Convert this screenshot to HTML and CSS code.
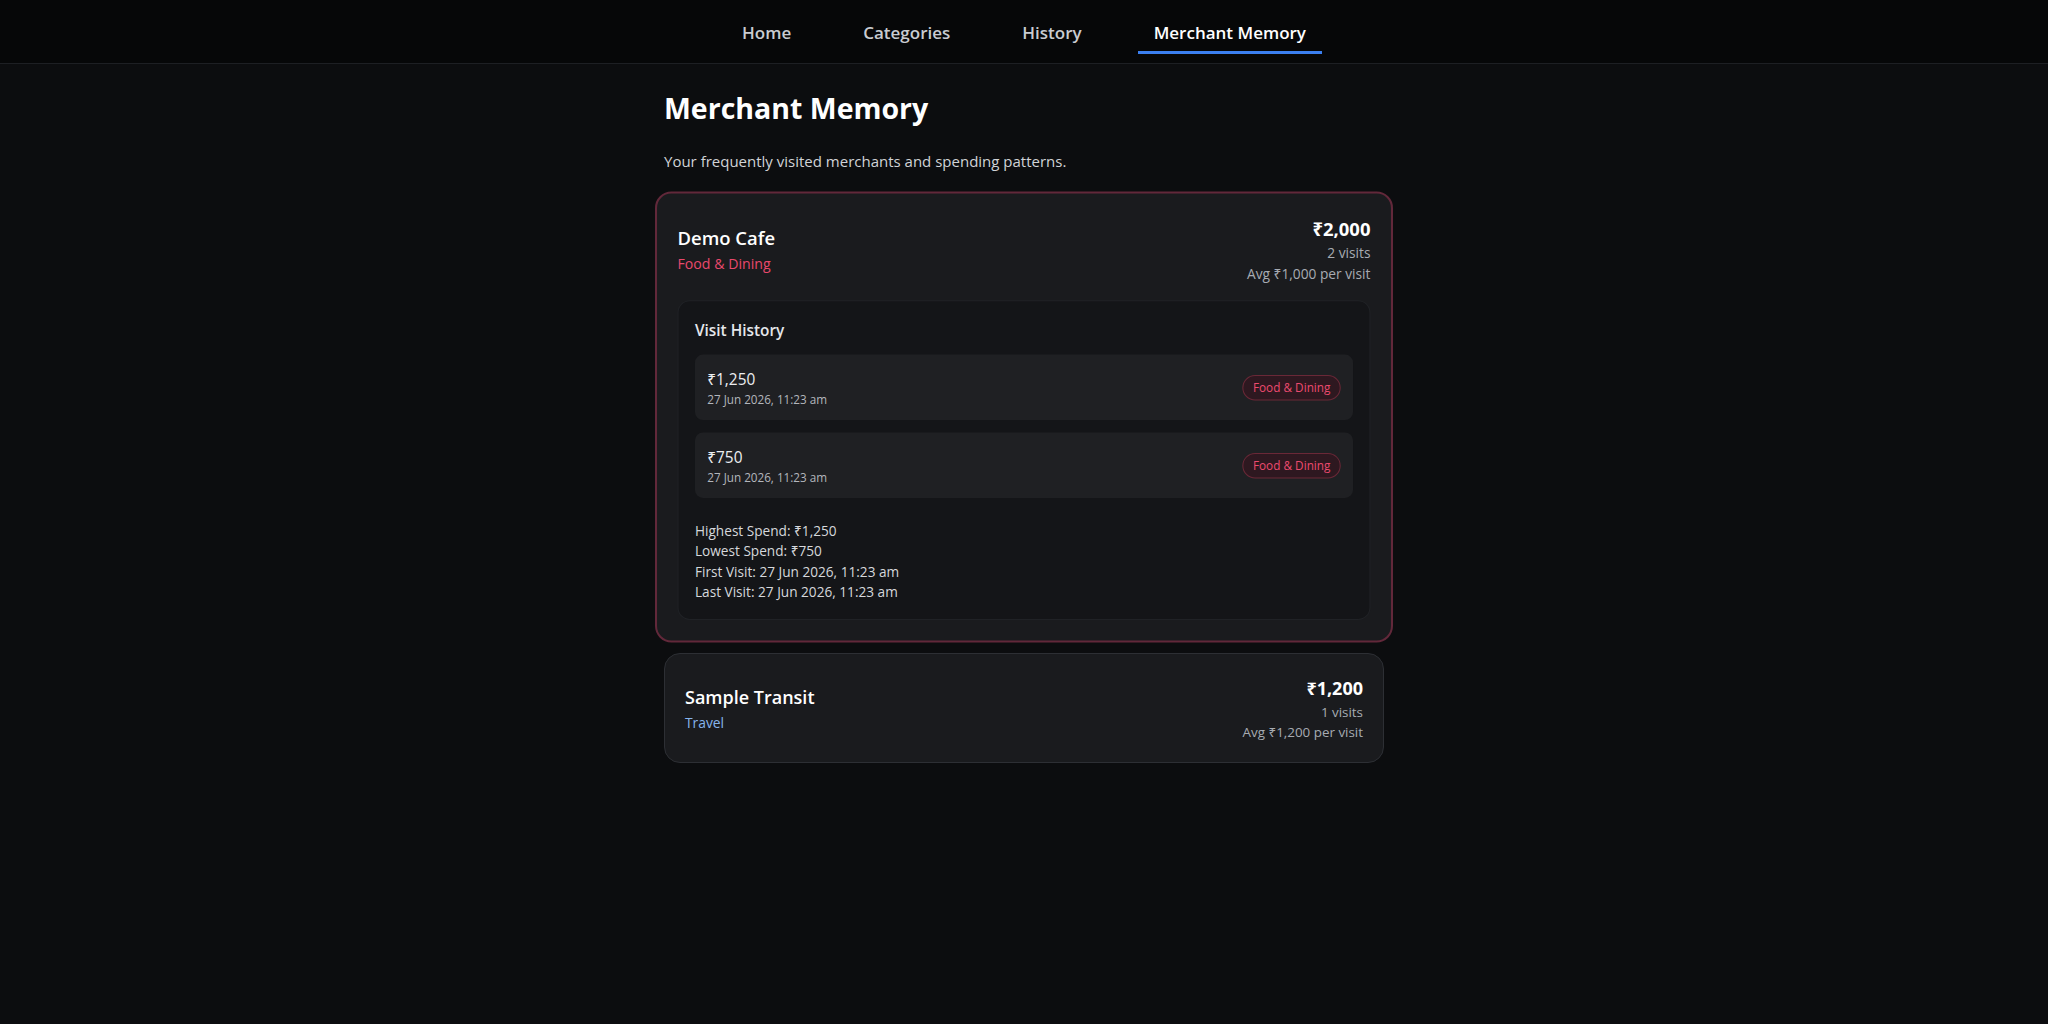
FILE: index.html
```html
<!DOCTYPE html>
<html lang="en">
  <head>
    <meta charset="UTF-8" />
    <meta name="viewport" content="width=device-width, initial-scale=1.0" />
    <title>Merchant Memory</title>
    <link rel="stylesheet" href="styles.css">
  </head>
  <body>
    <nav class="navbar">
      <a href="#" class="nav-link">Home</a>
      <a href="#" class="nav-link">Categories</a>
      <a href="#" class="nav-link">History</a>
      <a href="#" class="nav-link active">Merchant Memory</a>
    </nav>

    <main class="container">
      <h1 class="page-title">Merchant Memory</h1>
      <p class="page-subtitle">Your frequently visited merchants and spending patterns.</p>

      <div class="merchant-list">
        <!-- expanded merchant -->
        <div class="merchant-card expanded">
          <div class="merchant-header">
            <div>
              <div class="merchant-name">Demo Cafe</div>
              <div class="merchant-category food">Food &amp; Dining</div>
            </div>
            <div class="merchant-totals">
              <div class="merchant-amount">₹2,000</div>
              <div class="merchant-meta">2 visits</div>
              <div class="merchant-meta">Avg ₹1,000 per visit</div>
            </div>
          </div>

          <div class="visit-history">
            <div class="visit-title">Visit History</div>
            <div class="visit-list">
              <div class="visit-row">
                <div>
                  <div class="visit-amount">₹1,250</div>
                  <div class="visit-date">27 Jun 2026, 11:23 am</div>
                </div>
                <span class="badge">Food &amp; Dining</span>
              </div>
              <div class="visit-row">
                <div>
                  <div class="visit-amount">₹750</div>
                  <div class="visit-date">27 Jun 2026, 11:23 am</div>
                </div>
                <span class="badge">Food &amp; Dining</span>
              </div>
            </div>
            <div class="visit-stats">
              <div>Highest Spend: ₹1,250</div>
              <div>Lowest Spend: ₹750</div>
              <div>First Visit: 27 Jun 2026, 11:23 am</div>
              <div>Last Visit: 27 Jun 2026, 11:23 am</div>
            </div>
          </div>
        </div>

        <div class="merchant-card">
          <div class="merchant-header">
            <div>
              <div class="merchant-name">Sample Transit</div>
              <div class="merchant-category travel">Travel</div>
            </div>
            <div class="merchant-totals">
              <div class="merchant-amount">₹1,200</div>
              <div class="merchant-meta">1 visits</div>
              <div class="merchant-meta">Avg ₹1,200 per visit</div>
            </div>
          </div>
        </div>
      </div>
    </main>
  </body>
</html>
```

FILE: styles.css
```css
body {
  font-family: "Open Sans", "Noto Sans", sans-serif;
  margin: 0;
  padding: 0;
  background-color: #0c0d0f;
  color: #f3f4f6;
  min-height: 100vh;
}
.navbar {
  background-color: #060708;
  border-bottom: 1px solid #1d1f23;
  height: 63px;
  display: flex;
  justify-content: center;
  align-items: flex-end;
  gap: 40px;
}
.nav-link {
  color: #c9ccd1;
  text-decoration: none;
  font-size: 17px;
  font-weight: 600;
  line-height: 24px;
  padding: 0 16px 6px;
  margin-bottom: 9px;
  border-bottom: 3px solid transparent;
}
.nav-link.active {
  color: #ffffff;
  border-bottom-color: #3b7ff0;
}
.container {
  max-width: 720px;
  margin: 0 auto;
  padding: 26px 0 40px;
}
.page-title {
  margin: 0;
  font-size: 28.5px;
  line-height: 36px;
  font-weight: 700;
  color: #ffffff;
}
.page-subtitle {
  margin: 23px 0 24px;
  font-size: 15px;
  line-height: 24px;
  color: #d1d3d7;
}
.merchant-list {
  display: flex;
  flex-direction: column;
  gap: 16px;
}
.merchant-card {
  background-color: #1a1b1e;
  border: 1px solid #2d2f34;
  border-radius: 16px;
  padding: 20px;
}
.merchant-card.expanded {
  border: 2px solid #62283a;
  transform: scale(1.025);
}
.merchant-header {
  display: flex;
  justify-content: space-between;
  align-items: center;
}
.merchant-name {
  font-size: 18px;
  line-height: 28px;
  font-weight: 600;
  color: #ffffff;
}
.merchant-category {
  margin-top: 2px;
  font-size: 13.8px;
  line-height: 20px;
}
.merchant-category.food {
  color: #e8486c;
}
.merchant-category.travel {
  color: #86b4ec;
}
.merchant-totals {
  text-align: right;
}
.merchant-amount {
  font-size: 18px;
  line-height: 28px;
  font-weight: 700;
  color: #ffffff;
}
.merchant-meta {
  font-size: 13.4px;
  line-height: 20px;
  color: #a7abb2;
}
.visit-history {
  margin-top: 16px;
  background-color: #141518;
  border: 1px solid #202226;
  border-radius: 12px;
  padding: 16px;
}
.visit-title {
  font-size: 15px;
  line-height: 24px;
  font-weight: 600;
  color: #e5e7eb;
  margin-bottom: 12px;
}
.visit-list {
  display: flex;
  flex-direction: column;
  gap: 12px;
}
.visit-row {
  display: flex;
  justify-content: space-between;
  align-items: center;
  background-color: #1f2023;
  border-radius: 8px;
  padding: 12px;
}
.visit-amount {
  font-size: 15px;
  line-height: 24px;
  color: #eceef1;
}
.visit-date {
  font-size: 11.4px;
  line-height: 16px;
  color: #b3b6bc;
}
.badge {
  font-size: 11.5px;
  line-height: 15px;
  padding: 4px 9px;
  border: 1px solid #6a2837;
  border-radius: 999px;
  background-color: #2e1820;
  color: #ec4a6f;
}
.visit-stats {
  margin-top: 22px;
  font-size: 13.3px;
  line-height: 20px;
  color: #d6d8dc;
}
```
